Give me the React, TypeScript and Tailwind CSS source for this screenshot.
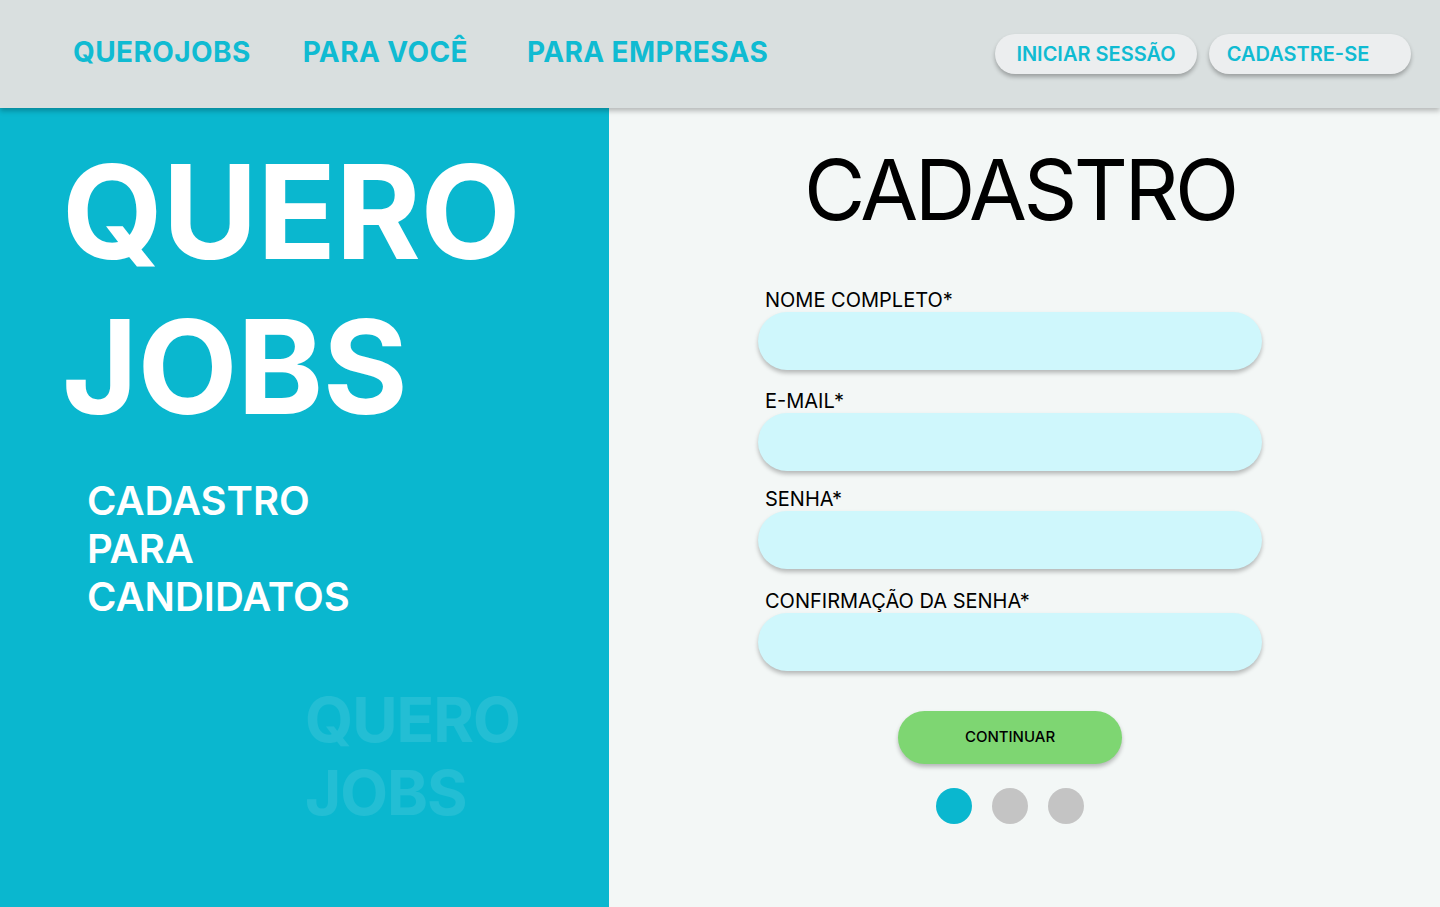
export default function App() {
  const fields = [
    { label: 'NOME COMPLETO*', mt: 'mt-[58px]' },
    { label: 'E-MAIL*', mt: 'mt-[21px]' },
    { label: 'SENHA*', mt: 'mt-[18px]' },
    { label: 'CONFIRMAÇÃO DA SENHA*', mt: 'mt-[22px]' },
  ]

  return (
    <div className="flex h-[907px] w-[1440px] flex-col overflow-hidden font-['Inter',sans-serif]">
      {/* top bar */}
      <header className="relative z-10 flex h-[108px] shrink-0 items-center bg-[#d9dfdf] pl-[73px] pr-[29px] shadow-[0_3px_5px_rgba(0,0,0,0.25)]">
        <nav className="flex items-center pb-[4px] text-[28px] font-bold tracking-[0.4px] text-[#10bbd2]">
          <span>QUEROJOBS</span>
          <span className="ml-[52px]">PARA VOCÊ</span>
          <span className="ml-[59px]">PARA EMPRESAS</span>
        </nav>
        <div className="ml-auto flex items-center gap-3">
          <button className="h-[40px] w-[202px] rounded-full bg-[#eceeef] text-[20px] font-semibold text-[#10bbd2] shadow-[0_3px_4px_rgba(0,0,0,0.28)]">
            INICIAR SESSÃO
          </button>
          <button className="h-[40px] w-[202px] rounded-full bg-[#eceeef] pr-[24px] text-[20px] font-semibold text-[#10bbd2] shadow-[0_3px_4px_rgba(0,0,0,0.28)]">
            CADASTRE-SE
          </button>
        </div>
      </header>

      <main className="flex flex-1">
        {/* left brand panel */}
        <section className="flex w-[609px] shrink-0 flex-col bg-[#0ab7cf] text-white">
          <h1 className="pl-[62px] pt-[26px] text-[130px] font-bold leading-[155px] tracking-[-0.5px]">
            QUERO
            <br />
            JOBS
          </h1>
          <p className="mt-[33px] pl-[87px] text-[40px] font-semibold leading-[48px]">
            CADASTRO
            <br />
            PARA
            <br />
            CANDIDATOS
          </p>
          <p className="mt-[62px] pl-[305px] text-[62px] font-bold leading-[73px] tracking-[-1px] text-white/10">
            QUERO
            <br />
            JOBS
          </p>
        </section>

        {/* right form panel */}
        <section className="flex flex-1 flex-col bg-[#f3f7f6]">
          <h2 className="mt-[40px] pl-[195px] text-[84px] font-normal leading-[84px] tracking-[-3.5px] text-black">
            CADASTRO
          </h2>
          <form className="ml-[149px] flex w-[504px] flex-col" onSubmit={(e) => e.preventDefault()}>
            {fields.map((f) => (
              <div key={f.label} className={`flex flex-col ${f.mt}`}>
                <label className="pl-[7px] text-[20px] leading-[20px] text-black">{f.label}</label>
                <input className="mt-[2px] h-[58px] rounded-full bg-[#cff7fc] px-6 shadow-[0_3px_4px_rgba(0,0,0,0.25)] outline-none" />
              </div>
            ))}
            <button className="mx-auto mt-[40px] h-[53px] w-[224px] rounded-full bg-[#7ed672] text-[15px] font-medium text-black shadow-[0_3px_4px_rgba(0,0,0,0.25)]">
              CONTINUAR
            </button>
            <div className="mt-[24px] flex justify-center gap-5">
              <span className="h-9 w-9 rounded-full bg-[#0ab7cf]" />
              <span className="h-9 w-9 rounded-full bg-[#c4c4c4]" />
              <span className="h-9 w-9 rounded-full bg-[#c4c4c4]" />
            </div>
          </form>
        </section>
      </main>
    </div>
  )
}
